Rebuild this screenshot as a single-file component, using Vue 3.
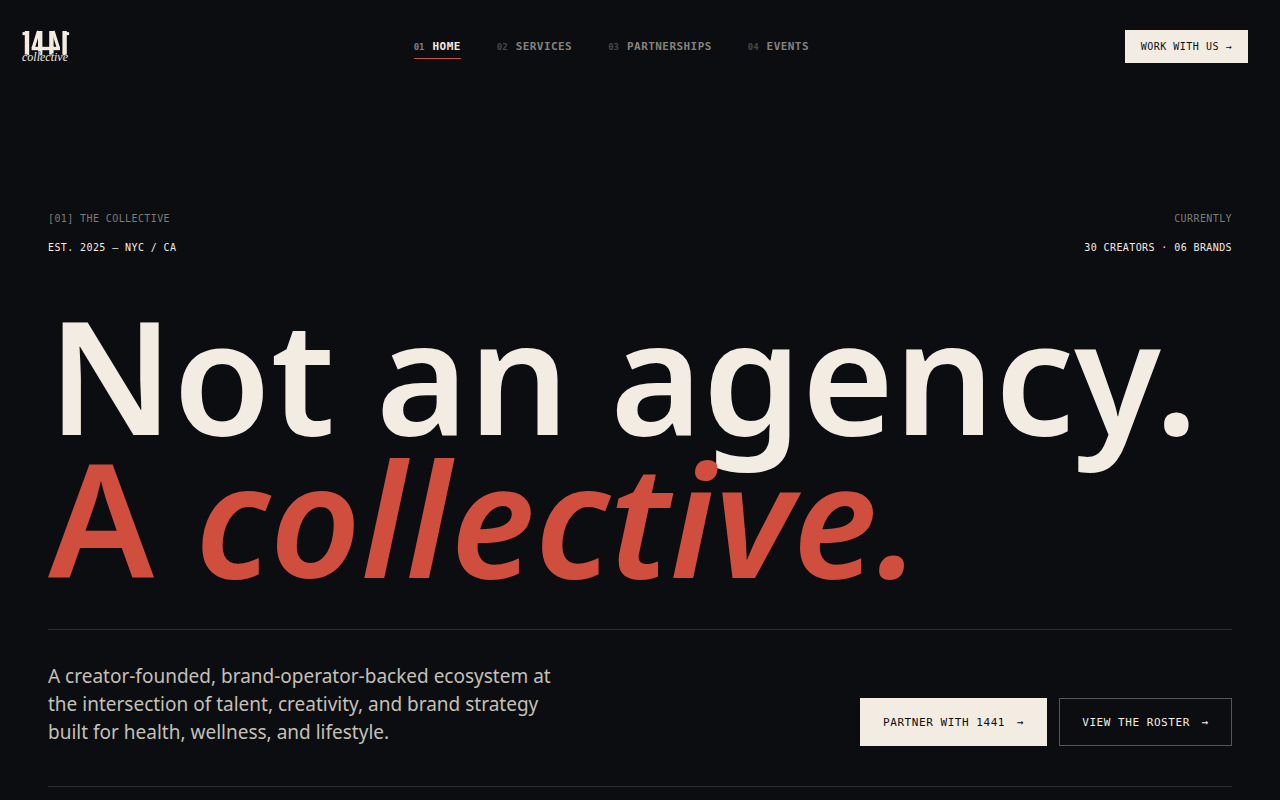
<script setup>
const links = [
  { n: '01', label: 'Home', active: true },
  { n: '02', label: 'Services' },
  { n: '03', label: 'Partnerships' },
  { n: '04', label: 'Events' },
]
</script>

<template>
  <div class="page">
    <header class="bar">
      <a class="logo" href="#" aria-label="1441 Collective">
        <svg width="52" height="36" viewBox="0 0 52 36" fill="none">
          <g stroke="#f3ece2">
            <g id="half">
              <path d="M2.5 5.6 H7" stroke-width="3" />
              <path d="M7 3 V27.5" stroke-width="4.4" />
              <path d="M18.5 3 L13.2 20" stroke-width="3.2" />
              <path d="M11.6 20.5 H26" stroke-width="3.4" />
              <path d="M20.2 3 V27.5" stroke-width="4.4" />
            </g>
            <use href="#half" transform="translate(51.6 0) scale(-1 1)" />
          </g>
          <text x="2" y="33" class="script">collective</text>
        </svg>
      </a>
      <nav class="nav">
        <a v-for="l in links" :key="l.n" href="#" :class="{ active: l.active }">
          <span class="num">{{ l.n }}</span><span>{{ l.label }}</span>
        </a>
      </nav>
      <button class="cta" type="button">Work with us →</button>
    </header>

    <main class="hero">
      <div class="meta">
        <div>
          <p class="dim">[01] The Collective</p>
          <p>Est. 2025 — NYC / CA</p>
        </div>
        <div class="right">
          <p class="dim">Currently</p>
          <p>30 Creators · 06 Brands</p>
        </div>
      </div>
      <h1>
        <span class="line">Not an agency.</span>
        <span class="line red">A <em>collective.</em></span>
      </h1>
      <section class="intro">
        <p>A creator-founded, brand-operator-backed ecosystem at the intersection of talent, creativity, and brand strategy built for health, wellness, and lifestyle.</p>
        <div class="actions">
          <button class="solid" type="button">Partner with 1441 <span>→</span></button>
          <button class="ghost" type="button">View the roster <span>→</span></button>
        </div>
      </section>
    </main>
  </div>
</template>

<style>
body { background: #0b0d10; }
</style>

<style scoped>
.page {
  min-height: 100vh;
  background: #0b0d10;
  color: #f3ece2;
  font-family: "Noto Sans", sans-serif;
  overflow: hidden;
}
.bar {
  display: flex;
  justify-content: space-between;
  align-items: center;
  height: 92px;
  padding: 0 32px 0 20px;
}
.logo { display: block; width: 78px; height: 36px; }
.logo svg { display: block; }
.script { font: italic 12px "Liberation Serif", serif; fill: #f3ece2; stroke: #0b0d10; stroke-width: 1px; paint-order: stroke; }
.nav { display: flex; gap: 36px; }
.nav a {
  display: flex;
  align-items: baseline;
  gap: 8px;
  padding: 6px 0 4px;
  border-bottom: 1px solid transparent;
  color: #85827e;
  font: bold 11px/14px "DejaVu Sans Mono", monospace;
  letter-spacing: 0.04em;
  text-transform: uppercase;
  text-decoration: none;
}
.nav .num { font-size: 9px; letter-spacing: 0; opacity: 0.5; }
.nav .active { color: #f3ece2; border-color: #d04e3e; }
button {
  border: 1px solid #f3ece2;
  border-radius: 0;
  background: #f3ece2;
  color: #0b0d10;
  font: 11px/14px "DejaVu Sans Mono", monospace;
  letter-spacing: 0.05em;
  text-transform: uppercase;
  white-space: nowrap;
}
.cta { height: 33px; padding: 2px 15px 0; font-size: 10px; }
.hero { padding: 119px 48px 0; }
.meta {
  display: flex;
  justify-content: space-between;
  font: 10px/16px "DejaVu Sans Mono", monospace;
  letter-spacing: 0.04em;
  text-transform: uppercase;
}
.meta p { margin: 0 0 13px; }
.meta .dim { color: #7f7c78; }
.right { text-align: right; }
h1 {
  margin: 33px 0 0;
  font-size: 158px;
  line-height: 143px;
  font-weight: 600;
  white-space: nowrap;
}
.line { display: block; }
.red { color: #d04e3e; }
.intro {
  display: flex;
  justify-content: space-between;
  align-items: flex-end;
  margin-top: 41px;
  padding: 32px 0 40px;
  border-top: 1px solid #292b2d;
  border-bottom: 1px solid #292b2d;
}
.intro p { max-width: 520px; margin: 0; font-size: 19px; line-height: 28px; color: #c5c0b8; }
.actions { display: flex; gap: 12px; }
.actions button { display: flex; align-items: center; gap: 12px; height: 48px; padding: 1px 22px 0; }
.actions .ghost { background: transparent; border-color: #55565a; color: #f3ece2; }
</style>
